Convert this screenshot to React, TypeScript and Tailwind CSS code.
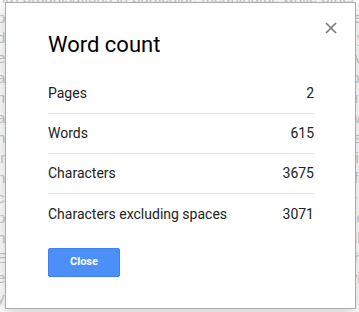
import React from "react";

const bgText =
  "ng) organisations in particular, meaningful, while other partners opt with insights e.g. or assessing the expected output of specific programmes and projects in every year during the reporting period, which assigns the relevant output to each Centre year by year and which is comparable with all ELIs and which assigns activity to quarters based on the date of its input with all ELIs and which assigns activity to quarters base";

export default function App() {
  const rows: [string, string][] = [
    ["Pages", "2"],
    ["Words", "615"],
    ["Characters", "3675"],
    ["Characters excluding spaces", "3071"],
  ];
  return (
    <div
      className="relative w-[359px] h-[312px] overflow-hidden bg-white"
      style={{ fontFamily: "Roboto, Arial, sans-serif" }}
    >
      {/* faded background document */}
      <p
        className="mt-[-12px] ml-[-3px] w-[368px] text-[15px] leading-[20px] text-[#c9c9c9] break-all"
        style={{ fontFamily: "Arial, 'Liberation Sans', sans-serif" }}
      >
        {bgText} {bgText}
      </p>

      {/* dialog */}
      <div className="absolute left-[5px] top-[2px] w-[351px] h-[307px] bg-white border border-[#acacac] shadow-[0_4px_16px_rgba(0,0,0,0.2)] flex flex-col">
        <div className="flex justify-end pt-[15px] pr-[14px] h-[28px]">
          <button className="w-[20px] h-[20px] flex items-center justify-center">
            <svg width="12" height="12" viewBox="0 0 12 12">
              <path d="M1 1 L11 11 M11 1 L1 11" stroke="#777" strokeWidth="1.6" />
            </svg>
          </button>
        </div>
        <div className="pl-[42px] pr-[41px] flex flex-col">
          <div className="text-[22px] leading-[28px] text-black">Word count</div>
          <div className="mt-[15px] flex flex-col">
            {rows.map(([label, value], i) => (
              <div
                key={label}
                className={`flex justify-between items-center h-[40px] text-[14px] text-[#222] ${
                  i < rows.length - 1 ? "border-b border-[#e5e5e5]" : ""
                }`}
              >
                <span>{label}</span>
                <span>{value}</span>
              </div>
            ))}
          </div>
          <button className="mt-[14px] w-[72px] h-[29px] rounded-[2px] bg-[#4d8ff8] border border-[#3f7fe8] text-white text-[11px] font-bold flex items-center justify-center">
            Close
          </button>
        </div>
      </div>
    </div>
  );
}
